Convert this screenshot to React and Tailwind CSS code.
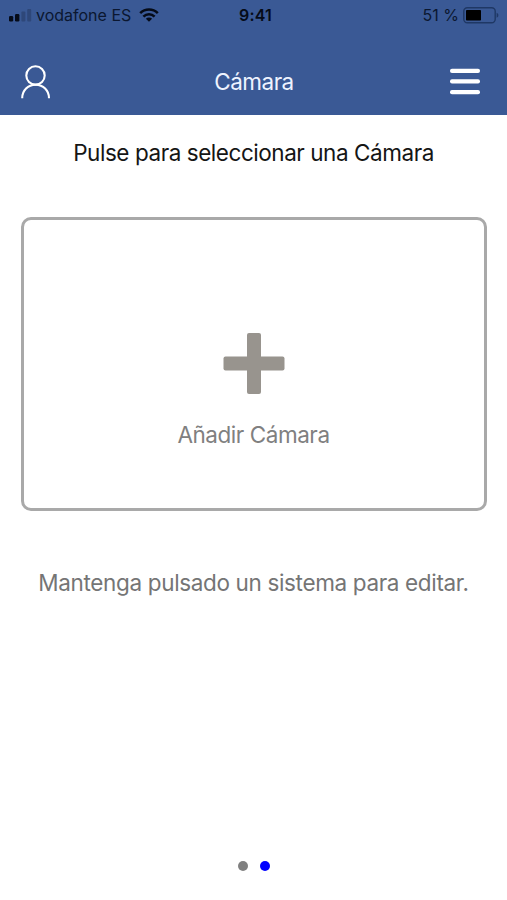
import React from 'react';

const SignalIcon = () => (
    <svg width="24" height="13" viewBox="0 0 24 13" fill="#050b18">
        <rect x="0" y="7" width="4.2" height="5.5" rx="1.2" />
        <rect x="6" y="5" width="4.4" height="7.5" rx="1.2" />
        <rect x="12.4" y="2.5" width="4" height="10" rx="1" opacity="0.22" />
        <rect x="18.2" y="0" width="4" height="12.5" rx="1" opacity="0.22" />
    </svg>
);

const WifiIcon = () => (
    <svg width="20" height="14" viewBox="0 0 20 14" fill="none" stroke="#050b18" strokeWidth="2.6">
        <path d="M1.2 5.1a12.6 12.6 0 0 1 17.6 0" />
        <path d="M4.4 8.6a8 8 0 0 1 11.2 0" />
        <path d="M6.9 10.7a4.4 4.4 0 0 1 6.2 0L10 13.8z" fill="#050b18" stroke="none" />
    </svg>
);

const BatteryIcon = () => (
    <svg width="37" height="17" viewBox="0 0 37 17">
        <rect x="0.8" y="0.8" width="31.4" height="15" rx="3.5" fill="none" stroke="#1f3865" strokeWidth="1.4" />
        <rect x="3" y="3" width="15" height="10.6" rx="0.8" fill="#000" />
        <path d="M33.6 5.8c2.4.9 2.4 4.1 0 5z" fill="#1f3865" />
    </svg>
);

const UserIcon = () => (
    <svg width="30" height="34" viewBox="0 0 30 34" fill="none" stroke="#fff" strokeWidth="2.1">
        <circle cx="14.5" cy="10.4" r="9.2" />
        <path d="M1.2 33.2C1.2 25.4 7 19.7 14.6 19.7S28 25.4 28 33.2" />
    </svg>
);

const MenuIcon = () => (
    <svg width="30" height="27" viewBox="0 0 30 27" fill="#fff">
        <rect y="0.7" width="30" height="4.3" rx="2" />
        <rect y="11.3" width="30" height="4.3" rx="2" />
        <rect y="21.9" width="30" height="4.3" rx="2" />
    </svg>
);

const PlusIcon = () => (
    <svg width="62" height="62" viewBox="0 0 62 62" fill="#98948e">
        <rect x="24" y="0" width="14" height="61" rx="2" />
        <rect x="0.5" y="23.4" width="61" height="14" rx="2" />
    </svg>
);

const pages = [
    { id: 'systems', color: 'bg-[#808080]' },
    { id: 'cameras', color: 'bg-[#0000ff]' },
];

export default function App() {
    return (
        <div className="flex h-[900px] w-[507px] flex-col bg-white font-['Inter',sans-serif]">
            <header className="h-[115px] bg-[#3a5995]">
                {/* Status bar */}
                <div className="grid h-[30px] grid-cols-3 items-center pr-[7px] pl-[9px] text-[16px] leading-none whitespace-nowrap text-[#0b1730]">
                    <div className="flex items-center">
                        <SignalIcon />
                        <span className="ml-[3px]">vodafone ES</span>
                        <span className="ml-[8px]">
                            <WifiIcon />
                        </span>
                    </div>
                    <span className="pl-[2px] text-center font-semibold tracking-[0.2px] text-[#050b18]">9:41</span>
                    <div className="flex items-center justify-end">
                        <span className="mr-[4px]">51 %</span>
                        <BatteryIcon />
                    </div>
                </div>

                {/* Navigation bar */}
                <div className="grid h-[85px] grid-cols-3 items-center pt-[18px] pr-[27px] pl-[28px]">
                    <button className="-ml-[7px] justify-self-start">
                        <UserIcon />
                    </button>
                    <h1 className="text-center text-[22.5px] leading-[30px] tracking-[-0.5px] text-[#eef3ff]">Cámara</h1>
                    <button className="justify-self-end">
                        <MenuIcon />
                    </button>
                </div>
            </header>

            <main className="flex flex-1 flex-col items-center whitespace-nowrap">
                <p className="mt-[23px] text-[22.5px] leading-[30px] tracking-[-0.45px] text-[#151515]">
                    Pulse para seleccionar una Cámara
                </p>

                <button className="mt-[49px] flex h-[294px] w-[466px] flex-col items-center rounded-[10px] border-[3px] border-[#a9a9a9] pt-[113px]">
                    <PlusIcon />
                    <span className="mt-[25px] text-[22.5px] leading-[30px] tracking-[-0.45px] text-[#808080]">Añadir Cámara</span>
                </button>

                <p className="mt-[57px] text-[22.5px] leading-[30px] tracking-[-0.35px] text-[#757575]">
                    Mantenga pulsado un sistema para editar.
                </p>
            </main>

            {/* Page dots */}
            <div className="flex justify-center gap-[12px] pb-[29px]">
                {pages.map((page) => (
                    <span key={page.id} className={`h-[10px] w-[10px] rounded-full ${page.color}`} />
                ))}
            </div>
        </div>
    );
}
